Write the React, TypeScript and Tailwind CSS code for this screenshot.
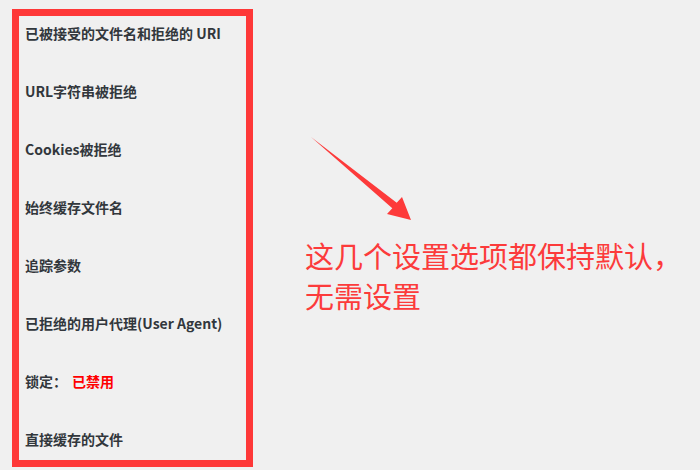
import React from "react";

const rows: React.ReactNode[] = [
  "已被接受的文件名和拒绝的 URI",
  "URL字符串被拒绝",
  "Cookies被拒绝",
  "始终缓存文件名",
  "追踪参数",
  "已拒绝的用户代理(User Agent)",
  <span key="lock">
    锁定：<span className="ml-[5px] text-[#ff0000]">已禁用</span>
  </span>,
  "直接缓存的文件",
];

export default function App() {
  return (
    <div
      className="relative w-[700px] h-[470px] bg-[#f0f0f0] overflow-hidden flex"
      style={{ fontFamily: '"Noto Sans CJK SC", "Noto Sans", sans-serif' }}
    >
      <div className="ml-[12px] mt-[9px] w-[241px] h-[458px] border-[7px] border-[#fe3838] pl-[6px] pt-[7px] flex flex-col gap-[38px] shrink-0">
        {rows.map((r, i) => (
          <div key={i} className="h-[20px] leading-[20px] text-[14px] font-semibold text-[#32373c] whitespace-nowrap">
            {r}
          </div>
        ))}
      </div>
      <div className="ml-[52px] mt-[235px] text-[29px] leading-[40px] text-[#fc3b3b] whitespace-nowrap">
        <div>这几个设置选项都保持默认，</div>
        <div>无需设置</div>
      </div>
      <svg className="absolute left-0 top-0" width="700" height="470" viewBox="0 0 700 470">
        <path
          d="M311 137 L396.7 202.8 L402 197 L411 220 L387 214 L392.3 208.2 Z"
          fill="#fd3a3a"
        />
      </svg>
    </div>
  );
}
